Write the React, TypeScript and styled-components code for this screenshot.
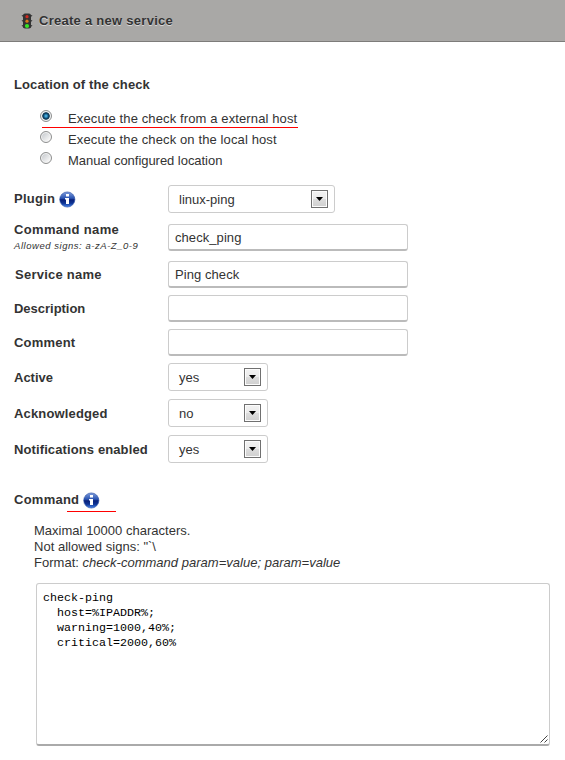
import React from "react";
import styled, { createGlobalStyle } from "styled-components";

const GlobalStyle = createGlobalStyle`
  * { box-sizing: border-box; }
  body {
    margin: 0;
    background: #fff;
    color: #333;
    font: 13px/16px "Liberation Sans", Arial, sans-serif;
  }
`;

const Page = styled.main`
  width: 565px;
  height: 760px;
  overflow: hidden;
`;

const Header = styled.header`
  display: flex;
  align-items: center;
  height: 42px;
  padding: 1px 0 0 21px;
  background: #a9a8a6;
  border-bottom: 1px solid #7d7c7a;
`;

const Title = styled.h1`
  margin: -1px 0 0 6px;
  font-size: 13px;
  line-height: 16px;
  letter-spacing: 0.27px;
  color: #333;
  text-shadow: 0 1px 0 #d6d6d6;
`;

const Content = styled.form`
  padding: 35px 15px 0 14px;
`;

const Heading = styled.h2`
  display: flex;
  margin: 0;
  font-size: 13px;
  line-height: 16px;
  letter-spacing: 0.11px;
`;

const RadioList = styled.div`
  margin: 17px 0 0 26px;
`;

const RadioRow = styled.label<{ $marked?: boolean }>`
  display: flex;
  width: 258px;
  height: 21px;
  background: ${(p) =>
    p.$marked
      ? "linear-gradient(#f00, #f00) 2px 17px / 256px 1px no-repeat"
      : "none"};
`;

const Radio = styled.span<{ $checked?: boolean }>`
  flex: none;
  width: 12px;
  height: 12px;
  margin: 0 16px 0 0;
  border: 1px solid #8e8f8f;
  border-radius: 50%;
  background: ${(p) =>
    p.$checked
      ? "radial-gradient(circle at 50% 50%, #6fc4e6 0, #2a8cc0 1.3px, #0b3a5c 2.8px, #153c55 3.4px, #dfe5e8 4.2px)"
      : "linear-gradient(135deg, #bfc3c8, #f6f6f6 80%)"};
  box-shadow: inset 0 0 0 1px #f4f4f4;
`;

const RadioText = styled.span<{ $tracking: number }>`
  line-height: 16px;
  padding-top: 1px;
  letter-spacing: ${(p) => p.$tracking}px;
  white-space: nowrap;
`;

const Field = styled.div<{ $gap: number }>`
  display: grid;
  grid-template-columns: 154px 1fr;
  align-items: center;
  margin-top: ${(p) => p.$gap}px;
`;

const Label = styled.label<{ $indent?: number; $drop?: number; $tracking?: number }>`
  display: flex;
  padding-top: ${(p) => p.$drop ?? 0}px;
  padding-left: ${(p) => p.$indent ?? 0}px;
  font-weight: bold;
  letter-spacing: ${(p) => p.$tracking ?? 0.25}px;
  white-space: nowrap;
`;

const StackedLabel = styled.div`
  height: 27px;
  margin-top: -4px;
`;

const Hint = styled.div`
  margin-top: 2px;
  font: italic 9.5px/12px "Liberation Sans", Arial, sans-serif;
  letter-spacing: 0.54px;
  white-space: nowrap;
`;

const Input = styled.input`
  width: 240px;
  height: 27px;
  padding: 0 6px;
  border: 1px solid #ccc;
  border-bottom: 2px solid #bbb;
  border-radius: 3px;
  outline: none;
  background: #fff;
  color: #333;
  font: 13px "Liberation Sans", Arial, sans-serif;
  letter-spacing: 0.07px;
`;

const SelectBox = styled.div<{ $width: number }>`
  display: flex;
  align-items: center;
  justify-content: space-between;
  width: ${(p) => p.$width}px;
  height: 28px;
  padding: 1px 6px 0 10px;
  border: 1px solid #ccc;
  border-radius: 3px;
  letter-spacing: 0;
`;

const SelectButton = styled.span`
  display: flex;
  align-items: center;
  justify-content: center;
  width: 17px;
  height: 18px;
  margin-top: -1px;
  border: 1px solid #707070;
  background: linear-gradient(#f2f2f2, #ebebeb 50%, #ddd 50%, #cfcfcf);
  box-shadow: inset 0 0 0 1px #fcfcfc;
`;

const Info = styled.svg`
  width: 17px;
  height: 17px;
  margin: 0 0 -2px 4px;
`;

const CommandHeading = styled(Heading)`
  margin-top: 29px;
  height: 20px;
  letter-spacing: 0.25px;
  background: linear-gradient(#f00, #f00) 53px 19px / 49px 1px no-repeat;
`;

const Help = styled.p`
  margin: 11px 0 0 20px;
  letter-spacing: 0.015px;
  white-space: nowrap;
`;

const Editor = styled.div`
  display: flex;
  align-items: flex-end;
  justify-content: space-between;
  width: 514px;
  height: 163px;
  margin: 12px 0 0 22px;
  border: 1px solid #ccc;
  border-bottom: 2px solid #aaa;
  border-radius: 3px;
`;

const Code = styled.pre`
  align-self: flex-start;
  margin: 7px 0 0 6px;
  color: #000;
  font: 11.67px/15px "Liberation Mono", "Courier New", monospace;
`;

const TrafficLight = () => (
  <svg width="12" height="16" viewBox="0 0 12 16">
    <path d="M0.5 2h11l-2 3h-7zM0.5 7h11l-2 3h-7zM0.5 12h11l-2 3h-7z" fill="#4a4a4a" />
    <rect x="2" y="0.5" width="8" height="15" rx="2" fill="#333" />
    <circle cx="6" cy="3.7" r="1.6" fill="#d02a20" />
    <circle cx="6" cy="8.2" r="1.6" fill="#d97a18" />
    <circle cx="6" cy="13" r="2.1" fill="#35e525" />
  </svg>
);

const InfoIcon = () => (
  <Info viewBox="0 0 17 17">
    <defs>
      <linearGradient id="ball" x2="0" y2="1">
        <stop offset="0" stopColor="#7d9bdb" />
        <stop offset="0.42" stopColor="#2a54b2" />
        <stop offset="0.52" stopColor="#08207a" />
        <stop offset="0.75" stopColor="#0f3596" />
        <stop offset="1" stopColor="#4a8af0" />
      </linearGradient>
    </defs>
    <circle cx="8.3" cy="8.5" r="7.6" fill="url(#ball)" stroke="#2a4fa5" strokeWidth="0.6" />
    <path d="M7 3h3v2.5H7zM6 7h4v6H7V8.4H6z" fill="#fff" />
  </Info>
);

const Select = ({ value, width = 100 }: { value: string; width?: number }) => (
  <SelectBox $width={width}>
    <span>{value}</span>
    <SelectButton>
      <svg width="7" height="4" viewBox="0 0 7 4">
        <path d="M0 0h7L3.5 4z" fill="#000" />
      </svg>
    </SelectButton>
  </SelectBox>
);

const locations = [
  { text: "Execute the check from a external host", tracking: 0.12 },
  { text: "Execute the check on the local host", tracking: 0.12 },
  { text: "Manual configured location", tracking: -0.04 },
];

const textFields = [
  { label: "Service name", value: "Ping check", gap: 10, indent: 1, tracking: 0.25 },
  { label: "Description", value: "", gap: 7, tracking: -0.02 },
  { label: "Comment", value: "", gap: 7, tracking: 0.2 },
];

const flags = [
  { label: "Active", value: "yes", gap: 7, tracking: 0 },
  { label: "Acknowledged", value: "no", gap: 8, tracking: 0.15 },
  { label: "Notifications enabled", value: "yes", gap: 8, tracking: 0.11 },
];

export default function App() {
  return (
    <Page>
      <GlobalStyle />
      <Header>
        <TrafficLight />
        <Title>Create a new service</Title>
      </Header>
      <Content>
        <Heading>Location of the check</Heading>
        <RadioList>
          {locations.map(({ text, tracking }, i) => (
            <RadioRow key={text} $marked={i === 0}>
              <Radio $checked={i === 0} />
              <RadioText $tracking={tracking}>{text}</RadioText>
            </RadioRow>
          ))}
        </RadioList>
        <Field $gap={12}>
          <Label>
            Plugin <InfoIcon />
          </Label>
          <Select value="linux-ping" width={167} />
        </Field>
        <Field $gap={11}>
          <StackedLabel>
            <Label $tracking={0.33}>Command name</Label>
            <Hint>Allowed signs: a-zA-Z_0-9</Hint>
          </StackedLabel>
          <Input defaultValue="check_ping" />
        </Field>
        {textFields.map((f) => (
          <Field key={f.label} $gap={f.gap}>
            <Label $indent={f.indent} $tracking={f.tracking}>{f.label}</Label>
            <Input defaultValue={f.value} />
          </Field>
        ))}
        {flags.map((f) => (
          <Field key={f.label} $gap={f.gap}>
            <Label $drop={2} $tracking={f.tracking}>{f.label}</Label>
            <Select value={f.value} />
          </Field>
        ))}
        <CommandHeading>
          Command <InfoIcon />
        </CommandHeading>
        <Help>
          Maximal 10000 characters.
          <br />
          Not allowed signs: "`\
          <br />
          Format: <em>check-command param=value; param=value</em>
        </Help>
        <Editor>
          <Code>{`check-ping
  host=%IPADDR%;
  warning=1000,40%;
  critical=2000,60%`}</Code>
          <svg width="9" height="9" viewBox="0 0 9 9">
            <path d="M0.5 7.5l7-7M4.5 7.5l3-3" stroke="#444" strokeWidth="1" />
          </svg>
        </Editor>
      </Content>
    </Page>
  );
}
